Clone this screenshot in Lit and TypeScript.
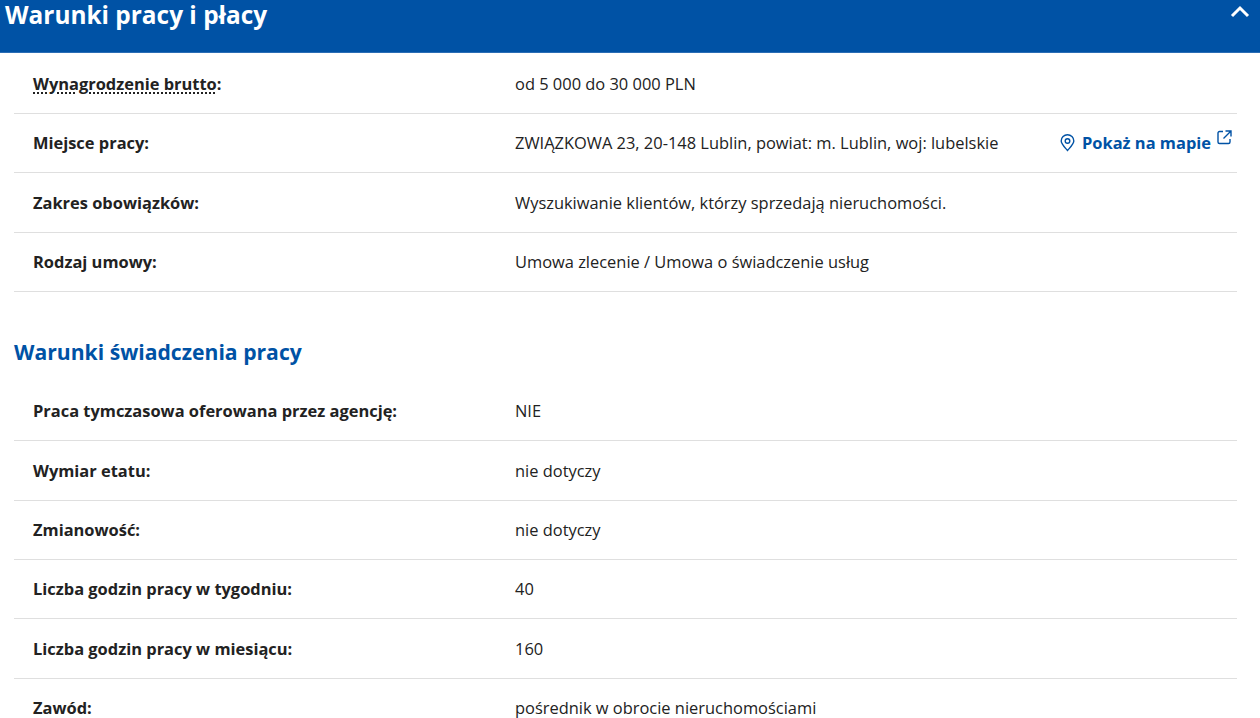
import { LitElement, html, css } from "lit";
import { customElement } from "lit/decorators.js";

const first = [
  ["Wynagrodzenie brutto:", "od 5 000 do 30 000 PLN"],
  ["Miejsce pracy:", "ZWIĄZKOWA 23, 20-148 Lublin, powiat: m. Lublin, woj: lubelskie"],
  ["Zakres obowiązków:", "Wyszukiwanie klientów, którzy sprzedają nieruchomości."],
  ["Rodzaj umowy:", "Umowa zlecenie / Umowa o świadczenie usług"],
];
const second = [
  ["Praca tymczasowa oferowana przez agencję:", "NIE"],
  ["Wymiar etatu:", "nie dotyczy"],
  ["Zmianowość:", "nie dotyczy"],
  ["Liczba godzin pracy w tygodniu:", "40"],
  ["Liczba godzin pracy w miesiącu:", "160"],
  ["Zawód:", "pośrednik w obrocie nieruchomościami"],
];

@customElement("app-root")
export class AppRoot extends LitElement {
  static styles = css`
    :host { display: block; height: 718px; overflow: hidden; background: #fff; font-family: "Open Sans", sans-serif; color: #222; font-size: 16.43px; }
    .bar { height: 52px; background: #0052a5; border-bottom: 1px solid #2a6db5; display: flex; justify-content: space-between; padding: 0 10px 0 5px; color: #fff; }
    .bar h1 { margin: 0; font-size: 24.4px; font-weight: 700; line-height: 30px; }
    .chev { margin-top: 5px; width: 20px; height: 14px; }
    .content { margin: 0 23px 0 14px; padding-top: 1.6px; }
    .row { height: 59.33px; box-sizing: border-box; border-bottom: 1px solid #dfdfdf; display: grid; grid-template-columns: 482px 1fr auto; align-items: center; padding: 0 5px 0.7px 19px; }
    .label { font-weight: 700; }
    .tip { text-decoration: underline dotted #222 2px; text-underline-offset: 3px; }
    h2 { margin: 0; padding: 43px 0 13px; height: 34px; font-size: 21.15px; line-height: 34px; font-weight: 700; color: #0052a5; }
    .link { display: flex; align-items: center; gap: 7px; color: #0052a5; font-weight: 700; }
    .link svg { display: block; }
    .ext { align-self: flex-start; margin: -1px 0 0 -1px; }
  `;
  row(r: string[], i: number, link = false) {
    return html`<div class="row">
      <div class="label">${i === 0 && link ? html`<span class="tip">${r[0].slice(0, -1)}</span>:` : r[0]}</div>
      <div>${r[1]}</div>
      ${link && i === 1
        ? html`<div class="link">
            <svg width="15" height="18" viewBox="0 0 15 18" fill="none" stroke="#0052a5" stroke-width="1.4"><path d="M7.500 16.500C4.500 13 1.200 10 1.200 7a6.300 6.300 0 0 1 12.600 0c0 3-3.300 6-6.300 9.500z"/><circle cx="7.500" cy="7" r="2.300"/></svg>
            <span>Pokaż na mapie</span>
            <svg class="ext" width="15" height="15" viewBox="0 0 15 15" fill="none" stroke="#0052a5" stroke-width="1.400"><path d="M6 1.500H2.500a1.500 1.500 0 0 0-1.500 1.500v9a1.500 1.500 0 0 0 1.500 1.500h9a1.500 1.500 0 0 0 1.500-1.500V9M8.500 1H14v5.500M14 1 6.500 8.500"/></svg>
          </div>`
        : ""}
    </div>`;
  }
  render() {
    return html`
      <div class="bar">
        <h1>Warunki pracy i płacy</h1>
        <svg class="chev" viewBox="0 0 20 14" fill="none" stroke="#fff" stroke-width="3"><path d="M2 11 10 3l8 8"/></svg>
      </div>
      <div class="content">
        <div class="section">${first.map((r, i) => this.row(r, i, true))}</div>
        <h2>Warunki świadczenia pracy</h2>
        <div class="section">${second.map((r, i) => this.row(r, i))}</div>
      </div>
    `;
  }
}
